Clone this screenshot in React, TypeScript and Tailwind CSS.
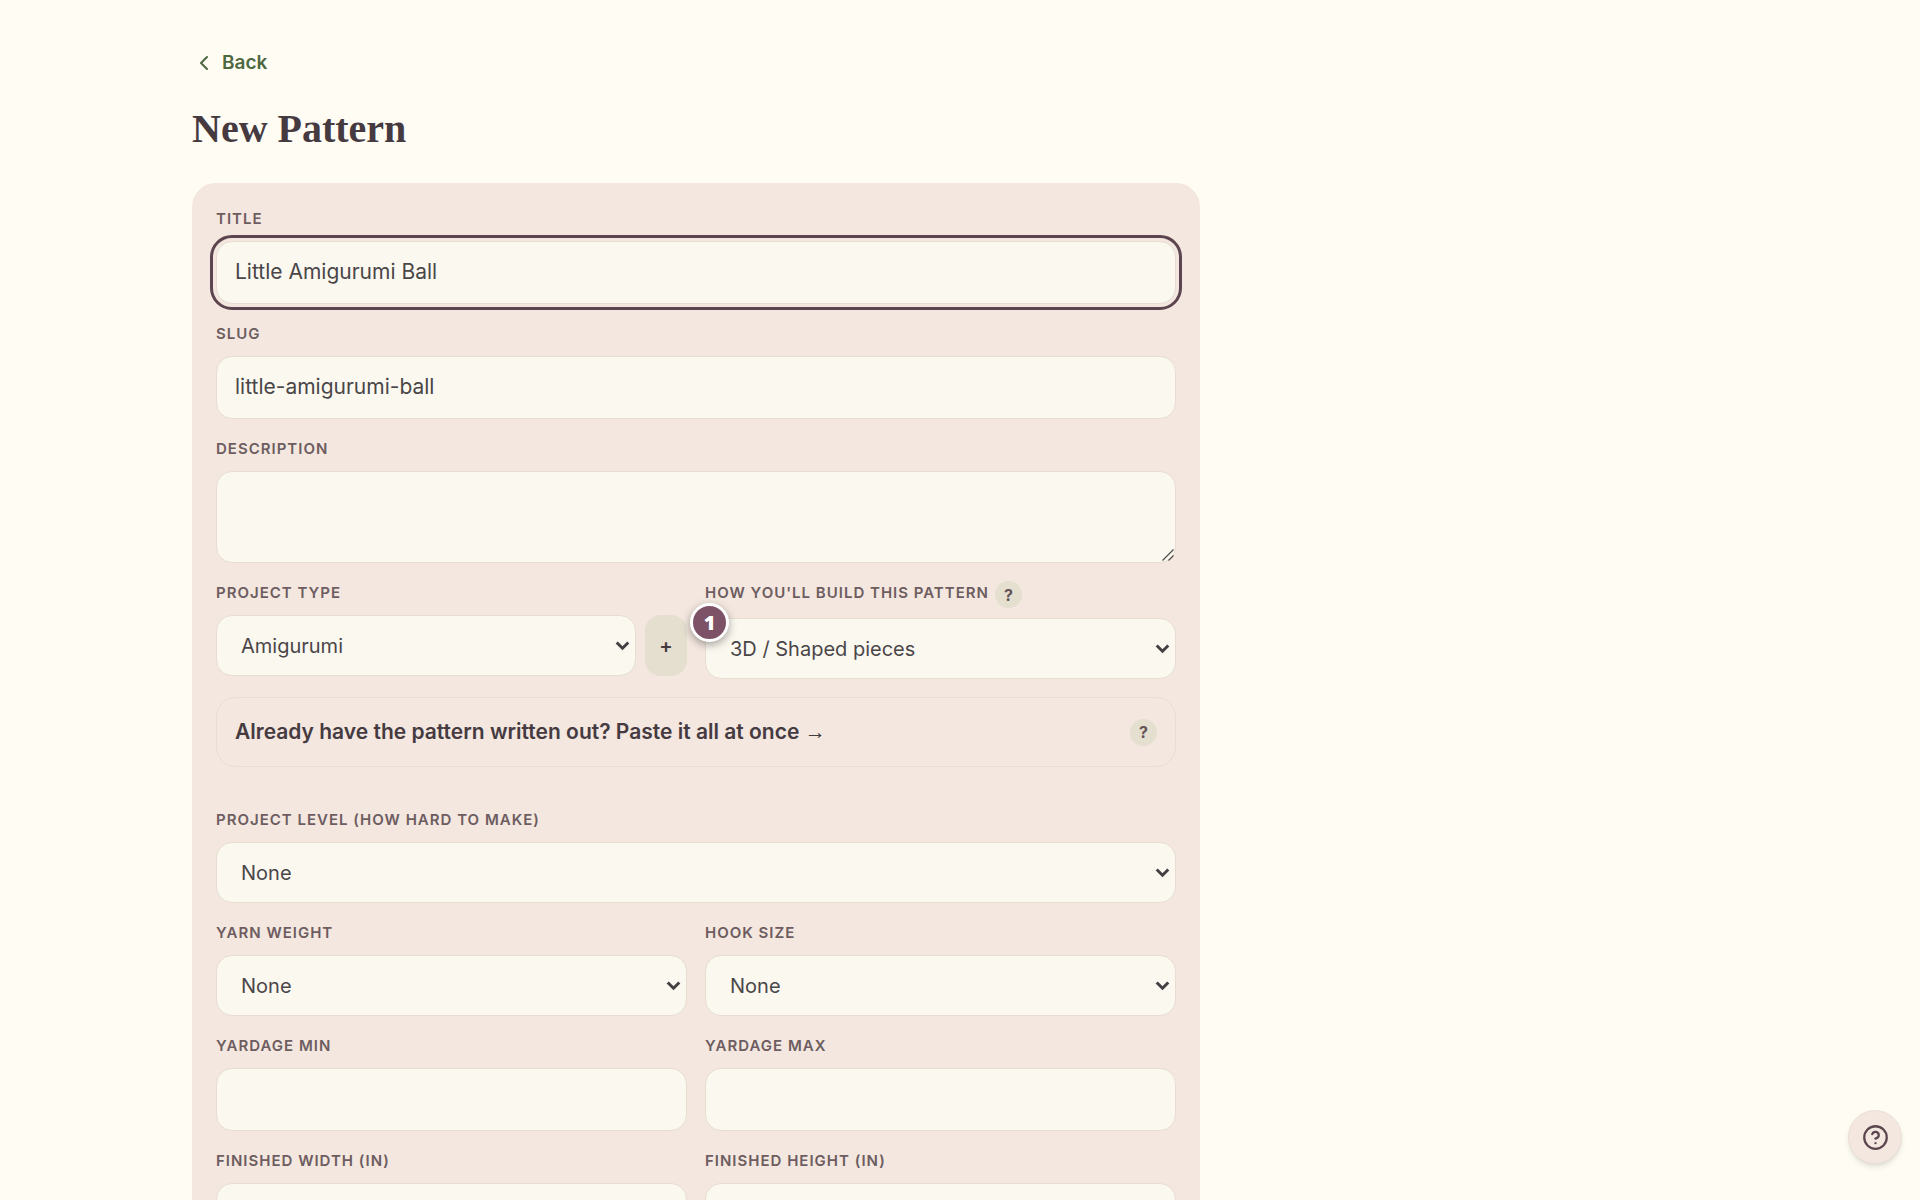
import React, { useState } from "react";
import { ChevronLeft, CircleHelp } from "lucide-react";

const labelStyle = "text-[15px] leading-6 font-semibold uppercase tracking-[1px] text-[#6d5c60]";
const controlStyle = "w-full rounded-2xl border border-[#e7ddd1] bg-[#fbf8f0] text-[#4a4648]";

function Field({ id, label, help, children }: { id: string; label: string; help?: boolean; children: React.ReactNode }) {
  return (
    <div className="flex min-w-0 flex-col gap-[10px]">
      <div className="flex items-start gap-[6px]">
        <label htmlFor={id} className={labelStyle}>{label}</label>
        {help && <HelpButton />}
      </div>
      {children}
    </div>
  );
}

function HelpButton() {
  return (
    <button
      type="button"
      aria-label="Help"
      className="h-[27px] w-[27px] shrink-0 rounded-full bg-[#e4dfcf] text-base leading-none font-bold text-[#655558]"
    >
      ?
    </button>
  );
}

function TextInput({ id, value = "", focused }: { id: string; value?: string; focused?: boolean }) {
  const [text, setText] = useState(value);
  return (
    <input
      id={id}
      value={text}
      onChange={(e) => setText(e.target.value)}
      className={`${controlStyle} h-[63px] px-[18px] pb-[2px] text-[21px] ${focused ? "outline-3 outline-offset-3 outline-[#5c454e]" : ""}`}
    />
  );
}

function Select({ id, options }: { id: string; options: string[] }) {
  return (
    <div className="relative min-w-0 flex-1">
      <select id={id} className={`${controlStyle} block h-[61px] appearance-none pr-10 pl-6 text-xl`}>
        {options.map((option) => (
          <option key={option}>{option}</option>
        ))}
      </select>
      <svg
        className="pointer-events-none absolute top-1/2 right-[6px] -translate-y-1/2"
        width="15"
        height="10"
        viewBox="0 0 15 10"
        fill="none"
        stroke="#443f42"
        strokeWidth="3"
      >
        <path d="M1.7 1.5 7.5 7.2 13.3 1.5" />
      </svg>
    </div>
  );
}

export default function App() {
  return (
    <div className="h-screen overflow-y-auto bg-[#fffcf4] font-[Inter,sans-serif] [scrollbar-width:none]">
      <main className="mx-auto max-w-[1536px] pt-[45px] pb-24">
        <a href="#" className="inline-flex h-9 items-center gap-[6px] text-[19px] font-semibold text-[#4d6840]">
          <ChevronLeft size={24} strokeWidth={2} />
          Back
        </a>
        <h1 className="mt-6 font-['Liberation_Serif',serif] text-[40px] leading-12 font-bold text-[#463a41]">New Pattern</h1>

        <form className="mt-[30px] flex max-w-[1008px] flex-col gap-[18px] rounded-3xl bg-[#f3e7df] p-6">
          <Field id="title" label="Title">
            <TextInput id="title" value="Little Amigurumi Ball" focused />
          </Field>
          <Field id="slug" label="Slug">
            <TextInput id="slug" value="little-amigurumi-ball" />
          </Field>
          <Field id="description" label="Description">
            <div className="relative">
              <textarea id="description" className={`${controlStyle} block h-[92px] resize-none px-[18px] py-3 text-[21px]`} />
              <svg
                className="pointer-events-none absolute right-[2px] bottom-[2px]"
                width="12"
                height="12"
                viewBox="0 0 12 12"
                stroke="#4a4648"
                strokeWidth="1.1"
              >
                <path d="M0.5 11.5 11.5 0.5M6.5 11.5 11.5 6.5" />
              </svg>
            </div>
          </Field>

          <div className="grid grid-cols-2 gap-[18px]">
            <Field id="type" label="Project type">
              <div className="flex gap-[9px]">
                <Select id="type" options={["Amigurumi", "Blanket", "Garment"]} />
                <button type="button" aria-label="Add project type" className="w-[42px] rounded-2xl bg-[#e4dfcf] text-xl font-semibold text-[#463a41]">
                  +
                </button>
              </div>
            </Field>
            <Field id="build" label="How you'll build this pattern" help>
              <div className="relative flex">
                <Select id="build" options={["3D / Shaped pieces", "Flat / Rows"]} />
                <span className="absolute -top-[15px] -left-[15px] flex h-[39px] w-[39px] items-center justify-center rounded-full border-3 border-white bg-[#7d5166] font-['Open_Sans',sans-serif] text-xl font-extrabold text-white shadow-[0_3px_9px_rgba(0,0,0,0.35)]">
                  1
                </span>
              </div>
            </Field>
          </div>

          <div className="flex h-[70px] items-center justify-between rounded-[20px] border border-[#e8ddd3] px-[18px]">
            <a href="#" className="text-[21px] font-semibold text-[#463a41]">
              Already have the pattern written out? Paste it all at once{" "}
              <span className="font-['Liberation_Serif',serif] font-normal">→</span>
            </a>
            <HelpButton />
          </div>

          <div className="mt-[23px]">
            <Field id="level" label="Project level (how hard to make)">
              <Select id="level" options={["None", "Beginner", "Easy"]} />
            </Field>
          </div>

          <div className="grid grid-cols-2 gap-[18px]">
            <Field id="yarn" label="Yarn weight">
              <Select id="yarn" options={["None", "Worsted"]} />
            </Field>
            <Field id="hook" label="Hook size">
              <Select id="hook" options={["None", "4.0 mm"]} />
            </Field>
            <Field id="yardage-min" label="Yardage min">
              <TextInput id="yardage-min" />
            </Field>
            <Field id="yardage-max" label="Yardage max">
              <TextInput id="yardage-max" />
            </Field>
            <Field id="width" label="Finished width (in)">
              <TextInput id="width" />
            </Field>
            <Field id="height" label="Finished height (in)">
              <TextInput id="height" />
            </Field>
          </div>
        </form>
      </main>

      <button
        type="button"
        aria-label="Open help"
        className="fixed right-[18px] bottom-9 flex h-[54px] w-[54px] items-center justify-center rounded-full border border-[#eadfd5] bg-[#f4e7e0] text-[#5c454e] shadow-md"
      >
        <CircleHelp size={27} />
      </button>
    </div>
  );
}
